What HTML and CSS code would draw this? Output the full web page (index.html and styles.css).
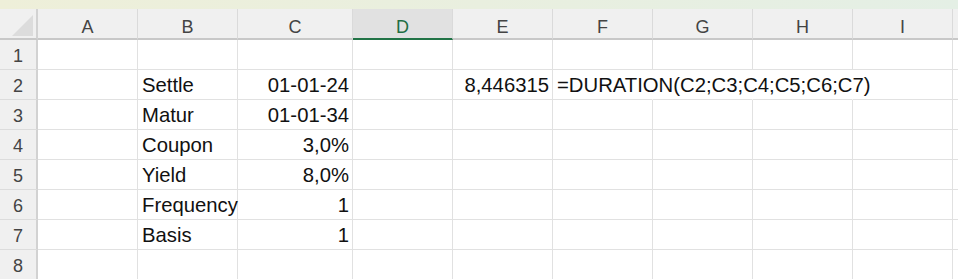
FILE: index.html
```html
<!DOCTYPE html>
<html lang="en">
<head>
  <meta charset="UTF-8" />
  <meta name="viewport" content="width=device-width, initial-scale=1" />
  <title>DURATION</title>
  <link rel="stylesheet" href="styles.css">
</head>
<body>
  <div class="ribbon-edge"></div>
  <div class="sheet">
    <div class="corner"><span class="tri"></span></div>
    <div class="ch">A</div>
    <div class="ch">B</div>
    <div class="ch">C</div>
    <div class="ch sel">D</div>
    <div class="ch">E</div>
    <div class="ch">F</div>
    <div class="ch">G</div>
    <div class="ch">H</div>
    <div class="ch">I</div>
    <div class="ch end"></div>

    <div class="rh">1</div>
    <div class="c"></div><div class="c"></div><div class="c"></div><div class="c"></div><div class="c"></div>
    <div class="c"></div><div class="c"></div><div class="c"></div><div class="c"></div><div class="c end"></div>

    <div class="rh">2</div>
    <div class="c"></div>
    <div class="c">Settle</div>
    <div class="c num">01-01-24</div>
    <div class="c"></div>
    <div class="c num">8,446315</div>
    <div class="c flow">=DURATION(C2;C3;C4;C5;C6;C7)</div>
    <div class="c flow"></div>
    <div class="c flow"></div>
    <div class="c"></div>
    <div class="c end"></div>

    <div class="rh">3</div>
    <div class="c"></div>
    <div class="c">Matur</div>
    <div class="c num">01-01-34</div>
    <div class="c"></div><div class="c"></div><div class="c"></div><div class="c"></div><div class="c"></div><div class="c"></div><div class="c end"></div>

    <div class="rh">4</div>
    <div class="c"></div>
    <div class="c">Coupon</div>
    <div class="c num">3,0%</div>
    <div class="c"></div><div class="c"></div><div class="c"></div><div class="c"></div><div class="c"></div><div class="c"></div><div class="c end"></div>

    <div class="rh">5</div>
    <div class="c"></div>
    <div class="c">Yield</div>
    <div class="c num">8,0%</div>
    <div class="c"></div><div class="c"></div><div class="c"></div><div class="c"></div><div class="c"></div><div class="c"></div><div class="c end"></div>

    <div class="rh">6</div>
    <div class="c"></div>
    <div class="c">Frequency</div>
    <div class="c num">1</div>
    <div class="c"></div><div class="c"></div><div class="c"></div><div class="c"></div><div class="c"></div><div class="c"></div><div class="c end"></div>

    <div class="rh">7</div>
    <div class="c"></div>
    <div class="c">Basis</div>
    <div class="c num">1</div>
    <div class="c"></div><div class="c"></div><div class="c"></div><div class="c"></div><div class="c"></div><div class="c"></div><div class="c end"></div>

    <div class="rh">8</div>
    <div class="c"></div><div class="c"></div><div class="c"></div><div class="c"></div><div class="c"></div>
    <div class="c"></div><div class="c"></div><div class="c"></div><div class="c"></div><div class="c end"></div>
  </div>
</body>
</html>
```

FILE: styles.css
```css
body {
  margin: 0;
  padding: 0;
  background: #fff;
  font-family: "Liberation Sans", Arial, sans-serif;
  overflow: hidden;
}
.ribbon-edge {
  height: 9px;
  background: linear-gradient(to right, #eeefd9, #e4efe5);
}
.sheet {
  display: grid;
  grid-template-columns: 38px 100px 100px 115px 100px 100px 100px 100px 100px 100px 1fr;
  grid-auto-rows: 30px;
  grid-template-rows: 31px;
}
.corner {
  position: relative;
  background: #f0f0f0;
  border-right: 2px solid #d2d2d2;
  border-bottom: 2px solid #c8c8c8;
  box-sizing: border-box;
}
.tri {
  position: absolute;
  right: 3px;
  bottom: 2px;
  width: 0;
  height: 0;
  border-left: 21px solid transparent;
  border-bottom: 21px solid #dcdcdc;
}
.ch {
  background: #f0f0f0;
  border-right: 1px solid #dadada;
  border-bottom: 2px solid #c8c8c8;
  box-sizing: border-box;
  color: #444;
  font-size: 18px;
  line-height: 26px;
  padding-top: 5px;
  text-align: center;
}
.ch.sel {
  background: #e1e1e1;
  color: #1f6e43;
  border-bottom-color: #217346;
}
.ch.end { border-right: none; }
.rh {
  background: #f0f0f0;
  border-right: 2px solid #d2d2d2;
  border-bottom: 1px solid #dcdcdc;
  box-sizing: border-box;
  color: #444;
  font-size: 18px;
  line-height: 27px;
  padding-top: 3px;
  text-align: center;
}
.c {
  border-right: 1px solid #e1e1e1;
  border-bottom: 1px solid #e1e1e1;
  box-sizing: border-box;
  color: #111;
  font-size: 20.3px;
  line-height: 30px;
  padding: 0 4px;
  white-space: nowrap;
}
.num {
  text-align: right;
  padding-right: 3px;
}
.flow {
  border-right-color: transparent;
  overflow: visible;
}
.c.end { border-right: none; }
```
